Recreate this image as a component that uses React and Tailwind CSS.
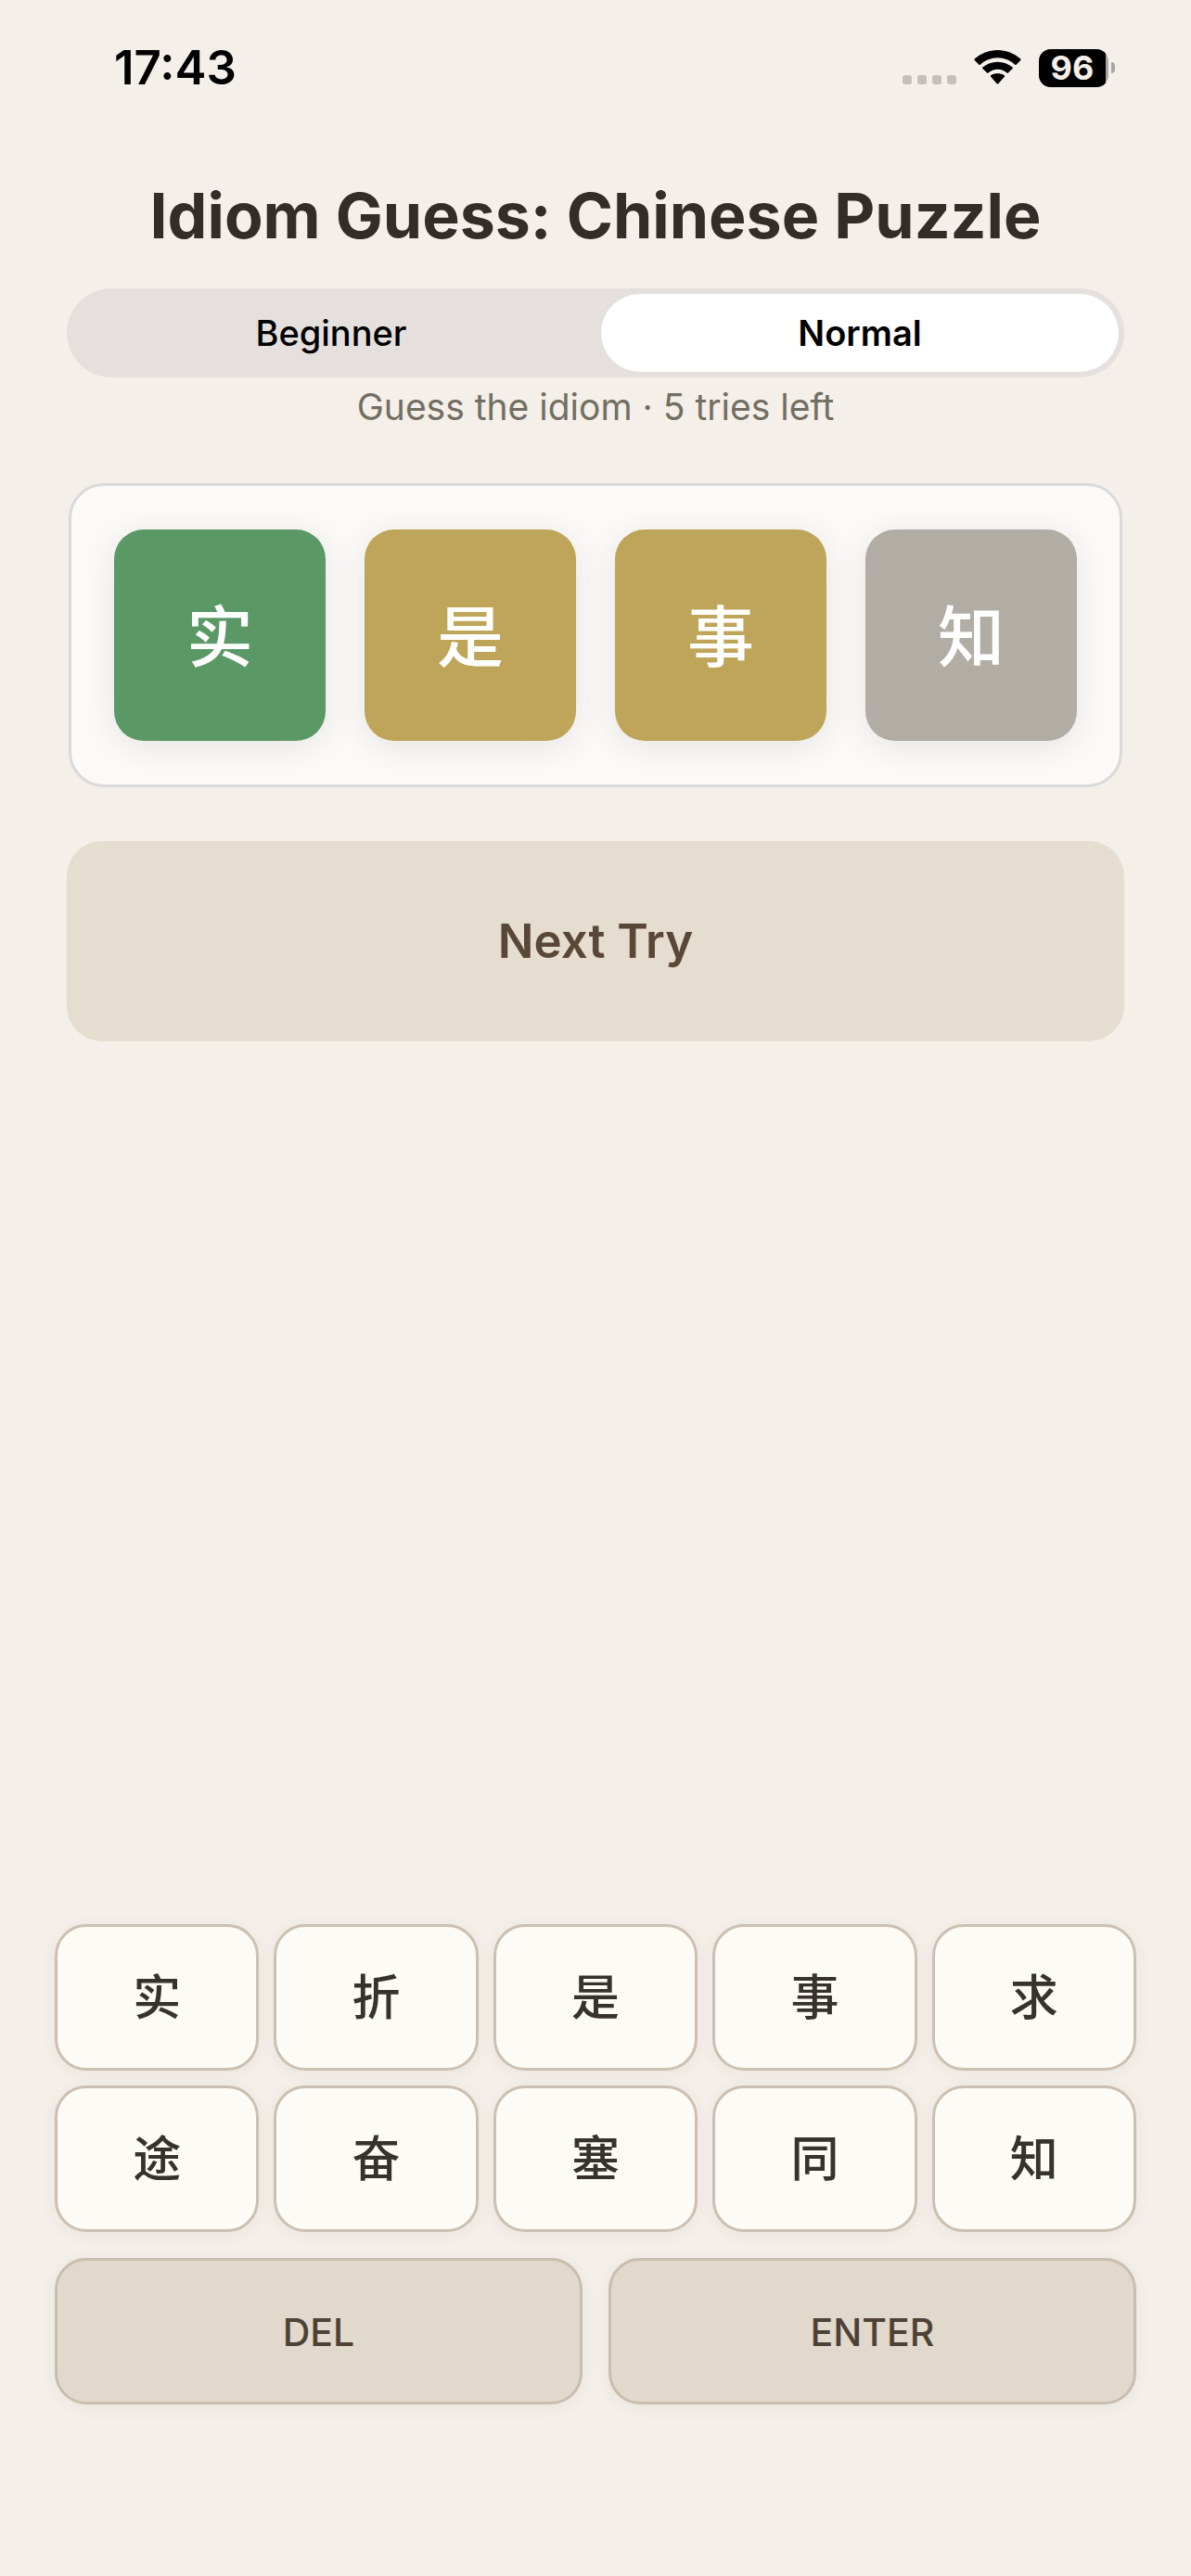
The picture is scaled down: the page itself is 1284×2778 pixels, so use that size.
import React, { useState } from "react";

const levels = ["Beginner", "Normal"];

const guess = [
  { char: "实", color: "bg-[#5a9966]" },
  { char: "是", color: "bg-[#bea559]" },
  { char: "事", color: "bg-[#bea559]" },
  { char: "知", color: "bg-[#b1aca4]" },
];

const keys = ["实", "折", "是", "事", "求", "途", "奋", "塞", "同", "知"];

const StatusBar = () => {
  return (
    <header className="flex h-[146px] items-center justify-between pl-[123px] pr-[82px] text-black">
      <span className="text-[51px] font-semibold leading-[60px]">17:43</span>
      <div className="flex items-center">
        <div className="mt-[26px] flex gap-1.5">
          {[0, 1, 2, 3].map((dot) => (
            <span key={dot} className="size-2.5 rounded-[3px] bg-[#c4bfba]" />
          ))}
        </div>
        <svg
          className="ml-[19px] h-[38px] w-[51px]"
          viewBox="0 0 51 38"
          fill="currentColor"
          aria-hidden="true"
        >
          <path d="M25.500 8.200C32.600 8.200 39.200 11 44.200 15.700C44.600 16.100 45.200 16.100 45.600 15.700L50.300 11C50.700 10.600 50.700 10 50.300 9.600C43.500 3.500 34.800 0 25.500 0C16.200 0 7.500 3.500 .7 9.600C.3 10 .3 10.600 .7 11L5.400 15.700C5.800 16.100 6.400 16.100 6.800 15.700C11.800 11 18.400 8.200 25.500 8.200Z" />
          <path d="M25.500 20.800C29.300 20.800 32.800 22.200 35.500 24.600C35.900 25 36.500 25 36.900 24.600L41.600 19.900C42 19.500 42 18.900 41.600 18.500C37.200 14.900 31.600 12.700 25.500 12.700C19.400 12.700 13.800 14.900 9.400 18.500C9 18.900 9 19.500 9.400 19.900L14.100 24.600C14.500 25 15.100 25 15.500 24.600C18.200 22.200 21.700 20.800 25.500 20.800Z" />
          <path d="M32.900 28.700C33.300 28.300 33.300 27.700 32.900 27.300C30.700 25.900 28.200 25.300 25.500 25.300C22.800 25.300 20.300 25.900 18.100 27.300C17.700 27.700 17.700 28.300 18.100 28.700L24.800 36.300C25.200 36.800 25.800 36.800 26.200 36.300Z" />
        </svg>
        <div className="ml-[19px] flex h-[41px] w-[75px] overflow-hidden rounded-[13px] bg-[#aaa6a2]">
          <span className="flex w-[72px] items-center justify-center bg-black text-[36px] font-bold leading-none text-[#f4efe8]">
            96
          </span>
        </div>
        <span className="ml-[3px] h-3 w-1 rounded-r-full bg-[#aaa6a2]" />
      </div>
    </header>
  );
};

const LevelSwitch = ({ level, setLevel }) => {
  return (
    <fieldset className="mt-[33px] flex h-24 gap-3 rounded-full bg-[#e5e0dd] p-1.5">
      {levels.map((name) => (
        <label
          key={name}
          className="flex flex-1 cursor-pointer items-center justify-center rounded-full text-[38px] font-medium leading-[48px] text-black has-checked:bg-white has-checked:font-semibold"
        >
          <input
            type="radio"
            name="level"
            className="sr-only"
            checked={level === name}
            onChange={() => setLevel(name)}
          />
          {name}
        </label>
      ))}
    </fieldset>
  );
};

const App = () => {
  const [level, setLevel] = useState("Normal");

  return (
    <div className="flex min-h-screen flex-col bg-[#f4efe8] font-['Inter','Noto_Sans_CJK_SC',sans-serif]">
      <StatusBar />
      <main className="flex flex-1 flex-col">
        <section className="mt-10 px-[72px]">
          <h1 className="text-center text-[68px] font-bold leading-[92px] text-[#332d29]">
            Idiom Guess: Chinese Puzzle
          </h1>
          <LevelSwitch level={level} setLevel={setLevel} />
          <p className="mt-2 text-center text-[39px] leading-[48px] text-[#736e62]">
            Guess the idiom · 5 tries left
          </p>
          <div className="mx-0.5 mt-[58px] grid grid-cols-4 gap-[42px] rounded-[38px] border-3 border-[#dadada] bg-[#fbfaf8] px-[46px] py-[47px]">
            {guess.map((tile) => (
              <div
                key={tile.char}
                className={`flex aspect-square items-center justify-center rounded-[32px] pt-1 text-[72px] font-medium leading-none text-white shadow-[0_6px_36px_rgba(60,40,30,0.10)] ${tile.color}`}
              >
                {tile.char}
              </div>
            ))}
          </div>
          <button
            type="button"
            className="mt-[58px] h-[216px] w-full rounded-[38px] bg-[#e5ddcf] text-[51px] font-semibold text-[#594738]"
          >
            Next Try
          </button>
        </section>
        <section className="mt-auto px-[59px] pb-[185px]">
          <div className="grid grid-cols-5 gap-4">
            {keys.map((key) => (
              <button
                key={key}
                type="button"
                className="h-[158px] rounded-[34px] border-3 border-[#cbc0b1] bg-[#fcfbf5] pt-0.5 text-[52px] font-medium leading-none text-[#38322e] shadow-[0_3px_18px_rgba(90,50,90,0.06)]"
              >
                {key}
              </button>
            ))}
          </div>
          <div className="mt-7 grid grid-cols-2 gap-7">
            {["DEL", "ENTER"].map((action) => (
              <button
                key={action}
                type="button"
                className="h-[158px] rounded-[34px] border-3 border-[#c9beae] bg-[#e1d9cb] pt-0.5 text-[41px] font-medium leading-none text-[#4d4235] shadow-[0_3px_18px_rgba(90,50,90,0.06)]"
              >
                {action}
              </button>
            ))}
          </div>
        </section>
      </main>
    </div>
  );
};

export default App;
